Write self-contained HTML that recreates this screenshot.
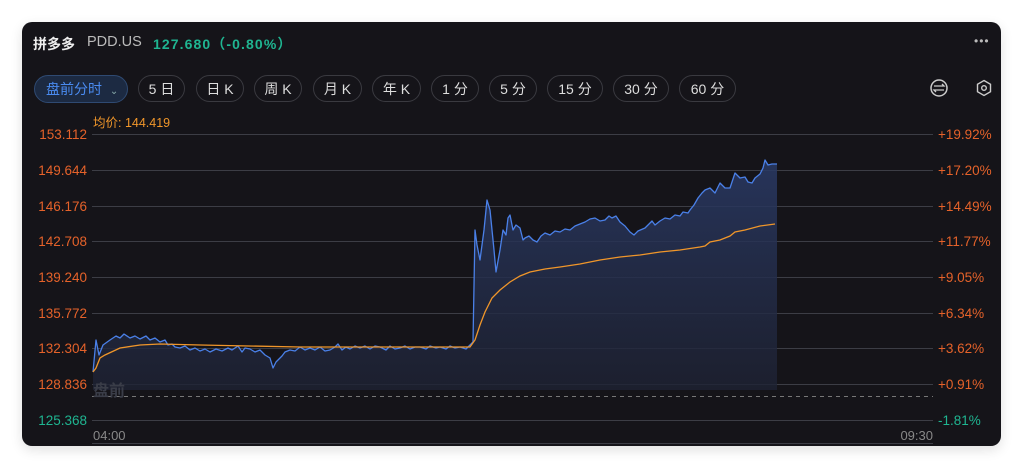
<!DOCTYPE html>
<html><head><meta charset="utf-8"><style>
body{margin:0;background:#fff;width:1024px;height:468px;overflow:hidden;font-family:"Liberation Sans","Noto Sans CJK SC",sans-serif}
.card{position:absolute;left:22px;top:22px;width:979px;height:424px;background:#151419;border-radius:10px;box-shadow:0 4px 12px rgba(0,0,0,.12)}
.t{position:absolute;white-space:nowrap}
.btn{position:absolute;top:75px;height:27px;border:1px solid #3a3a40;border-radius:14px;color:#ddd;font-size:14px;line-height:26px;text-align:center;box-sizing:border-box}
</style></head><body>
<div class="card"></div>
<div class="t" style="left:33px;top:34px;font-size:14px;color:#eee;font-weight:bold">拼多多</div>
<div class="t" style="left:87px;top:34px;font-size:14.5px;color:#bbb">PDD.US</div>
<div class="t" style="left:153px;top:34px;font-size:14px;color:#1fb591;font-weight:bold;letter-spacing:1.1px">127.680（-0.80%）</div>
<div class="t" style="left:974px;top:34px;font-size:12px;color:#bbb;letter-spacing:1px">•••</div>
<div class="btn" style="left:34px;width:94px;top:75px;height:28px;background:#1c2a42;border-color:#2f4a72;color:#4a8bf0;font-size:14px;line-height:27px;text-align:left;padding-left:11px">盘前分时 <span style="color:#8aa;font-size:10px;margin-left:4px">⌄</span></div>
<div class="btn" style="left:138px;width:47px">5 日</div>
<div class="btn" style="left:196px;width:48px">日 K</div>
<div class="btn" style="left:254px;width:48px">周 K</div>
<div class="btn" style="left:313px;width:49px">月 K</div>
<div class="btn" style="left:372px;width:49px">年 K</div>
<div class="btn" style="left:431px;width:48px">1 分</div>
<div class="btn" style="left:489px;width:48px">5 分</div>
<div class="btn" style="left:547px;width:56px">15 分</div>
<div class="btn" style="left:613px;width:56px">30 分</div>
<div class="btn" style="left:679px;width:57px">60 分</div>
<svg style="position:absolute;left:0;top:0" width="1024" height="468">
<circle cx="939" cy="88" r="8" fill="none" stroke="#ccc" stroke-width="1.5"/>
<path d="M934 86h10l-2-2M944 90h-10l2 2" fill="none" stroke="#ccc" stroke-width="1.3"/>
<path d="M984 80.5l6.5 3.75v7.5L984 95.5l-6.5-3.75v-7.5z" fill="none" stroke="#ccc" stroke-width="1.4"/>
<circle cx="984" cy="88" r="2.3" fill="none" stroke="#ccc" stroke-width="1.4"/>
<g stroke="#3c3d45" stroke-width="1">
<line x1="92" y1="134.5" x2="933" y2="134.5"/><line x1="92" y1="170.5" x2="933" y2="170.5"/>
<line x1="92" y1="206.5" x2="933" y2="206.5"/><line x1="92" y1="241.5" x2="933" y2="241.5"/>
<line x1="92" y1="277.5" x2="933" y2="277.5"/><line x1="92" y1="313.5" x2="933" y2="313.5"/>
<line x1="92" y1="348.5" x2="933" y2="348.5"/><line x1="92" y1="384.5" x2="933" y2="384.5"/>
<line x1="92" y1="420.5" x2="933" y2="420.5"/><line x1="92" y1="443.5" x2="933" y2="443.5"/>
</g>
<line x1="92" y1="396.5" x2="933" y2="396.5" stroke="#777" stroke-dasharray="4,4"/>
<defs><linearGradient id="g" x1="0" y1="0" x2="0" y2="1"><stop offset="0" stop-color="#2a3a66" stop-opacity=".85"/><stop offset="1" stop-color="#1e2233" stop-opacity=".8"/></linearGradient>
<path id="bl" d="M93 372L96 340L99 355L103 345L110 340L116 336L120 338L124 334L130 338L135 336L140 339L146 336L150 340L155 338L160 342L165 340L168 345L172 344L175 347L180 348L185 346L190 350L195 348L200 351L205 349L210 352L216 349L222 351L228 348L232 350L238 346L242 352L245 348L250 349L255 352L260 350L265 355L270 358L273 368L276 362L278 360L282 356L285 352L290 350L295 351L300 347L305 350L310 348L315 350L320 347L325 351L330 350L335 347L338 344L342 350L346 347L350 349L355 346L360 348L365 346L370 349L375 346L380 347L386 350L390 346L395 349L400 348L405 346L410 349L415 347L420 347L426 349L430 346L436 348L440 347L446 349L450 346L455 348L460 347L466 349L470 345L473 342L475 230L477 245L480 260L484 230L487 200L490 210L494 250L496 272L500 250L503 230L506 235L508 218L510 215L513 230L516 225L520 228L523 240L525 238L529 236L533 240L537 242L541 236L545 233L550 235L555 231L560 232L565 229L570 230L575 226L580 224L585 222L590 219L595 218L600 221L605 220L609 216L612 218L616 216L620 222L625 226L630 232L634 235L638 231L645 228L649 224L652 221L655 225L660 221L665 218L670 219L675 215L680 216L683 212L688 213L690 210L694 205L698 198L702 193L705 190L710 188L715 193L720 183L725 188L730 188L735 173L740 178L745 177L748 182L752 183L755 178L760 174L763 168L765 160L768 165L772 164L777 164"/></defs>
<path d="M93 372L96 340L99 355L103 345L110 340L116 336L120 338L124 334L130 338L135 336L140 339L146 336L150 340L155 338L160 342L165 340L168 345L172 344L175 347L180 348L185 346L190 350L195 348L200 351L205 349L210 352L216 349L222 351L228 348L232 350L238 346L242 352L245 348L250 349L255 352L260 350L265 355L270 358L273 368L276 362L278 360L282 356L285 352L290 350L295 351L300 347L305 350L310 348L315 350L320 347L325 351L330 350L335 347L338 344L342 350L346 347L350 349L355 346L360 348L365 346L370 349L375 346L380 347L386 350L390 346L395 349L400 348L405 346L410 349L415 347L420 347L426 349L430 346L436 348L440 347L446 349L450 346L455 348L460 347L466 349L470 345L473 342L475 230L477 245L480 260L484 230L487 200L490 210L494 250L496 272L500 250L503 230L506 235L508 218L510 215L513 230L516 225L520 228L523 240L525 238L529 236L533 240L537 242L541 236L545 233L550 235L555 231L560 232L565 229L570 230L575 226L580 224L585 222L590 219L595 218L600 221L605 220L609 216L612 218L616 216L620 222L625 226L630 232L634 235L638 231L645 228L649 224L652 221L655 225L660 221L665 218L670 219L675 215L680 216L683 212L688 213L690 210L694 205L698 198L702 193L705 190L710 188L715 193L720 183L725 188L730 188L735 173L740 178L745 177L748 182L752 183L755 178L760 174L763 168L765 160L768 165L772 164L777 164L777 390L93 390Z" fill="url(#g)"/>
<use href="#bl" fill="none" stroke="#4a80e8" stroke-width="1.3" stroke-linejoin="round"/>
<polyline fill="none" stroke="#f0962a" stroke-width="1.3" points="93,372 96,368 100,358 105,355 120,348 140,345 160,344 200,345 300,347 400,347 470,347 475,340 480,325 485,312 492,298 500,290 510,282 520,276 530,272 545,269 560,267 580,264 600,260 620,257 640,255 660,252 680,250 700,247 705,246 710,242 720,240 725,238 730,236 735,232 745,230 760,226 775,224"/>
<g font-size="13.5" fill="#e5622a" text-anchor="end">
<text x="87" y="139">153.112</text><text x="87" y="175">149.644</text><text x="87" y="211">146.176</text>
<text x="87" y="246">142.708</text><text x="87" y="282">139.240</text><text x="87" y="318">135.772</text>
<text x="87" y="353">132.304</text><text x="87" y="389">128.836</text><text x="87" y="425" fill="#1fb591">125.368</text>
</g>
<g font-size="13.5" fill="#e5622a">
<text x="938" y="139">+19.92%</text><text x="938" y="175">+17.20%</text><text x="938" y="211">+14.49%</text>
<text x="938" y="246">+11.77%</text><text x="938" y="282">+9.05%</text><text x="938" y="318">+6.34%</text>
<text x="938" y="353">+3.62%</text><text x="938" y="389">+0.91%</text><text x="938" y="425" fill="#1fb591">-1.81%</text>
</g>
<text x="93" y="127" font-size="12.5" fill="#f0962a">均价: 144.419</text>
<text x="93" y="440" font-size="13" fill="#888">04:00</text>
<text x="933" y="440" font-size="13" fill="#888" text-anchor="end">09:30</text>
<text x="93" y="396" font-size="16" fill="#3a3d48" font-weight="bold">盘前</text>
</svg>
</body></html>
